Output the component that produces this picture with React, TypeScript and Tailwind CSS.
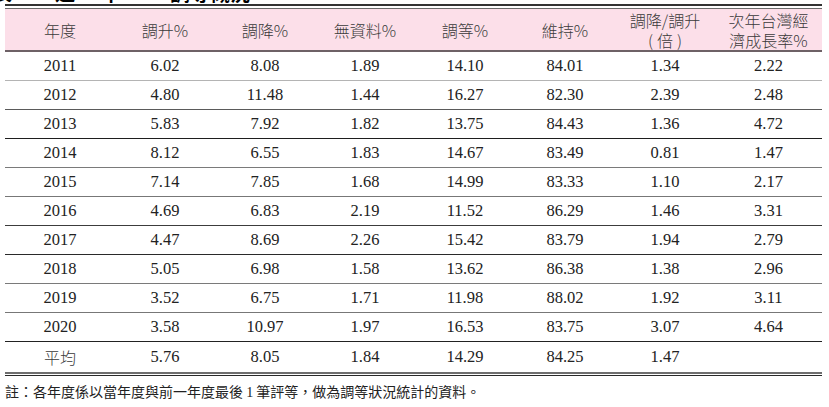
const HEAD_FONT = { fontFamily: '"Noto Sans CJK TC", "Noto Sans", sans-serif' };
const NUM_FONT = { fontFamily: '"Liberation Serif", "Times New Roman", serif' };

const rows = [
  { y: '2011', v: ['6.02', '8.08', '1.89', '14.10', '84.01', '1.34', '2.22'], line: 'border-[#b4b4b4]' },
  { y: '2012', v: ['4.80', '11.48', '1.44', '16.27', '82.30', '2.39', '2.48'], line: 'border-[#5a5a5a]' },
  { y: '2013', v: ['5.83', '7.92', '1.82', '13.75', '84.43', '1.36', '4.72'], line: 'border-[#1e1e1e]' },
  { y: '2014', v: ['8.12', '6.55', '1.83', '14.67', '83.49', '0.81', '1.47'], line: 'border-[#7a7a7a]' },
  { y: '2015', v: ['7.14', '7.85', '1.68', '14.99', '83.33', '1.10', '2.17'], line: 'border-[#777777]' },
  { y: '2016', v: ['4.69', '6.83', '2.19', '11.52', '86.29', '1.46', '3.31'], line: 'border-[#3c3c3c]' },
  { y: '2017', v: ['4.47', '8.69', '2.26', '15.42', '83.79', '1.94', '2.79'], line: 'border-[#2a2a2a]' },
  { y: '2018', v: ['5.05', '6.98', '1.58', '13.62', '86.38', '1.38', '2.96'], line: 'border-[#7a7a7a]' },
  { y: '2019', v: ['3.52', '6.75', '1.71', '11.98', '88.02', '1.92', '3.11'], line: 'border-[#777777]' },
  { y: '2020', v: ['3.58', '10.97', '1.97', '16.53', '83.75', '3.07', '4.64'], line: 'border-[#222222]' },
];

const cols = 'grid grid-cols-[110px_repeat(6,100px)_107px]';

export default function App() {
  return (
    <div className="w-[829px] h-[407px] bg-white overflow-hidden text-[#222]">
      {/* title, cut off at the top edge */}
      <div className="h-[4px] overflow-hidden">
        <div className="-mt-[17px] flex text-[20px] leading-[20px] font-bold text-black" style={HEAD_FONT}>
          <span className="-ml-[8px]">表</span>
          <span className="ml-[43px]">近</span>
          <span className="ml-[25px]">年</span>
          <span className="ml-[50px]">調等概況</span>
        </div>
      </div>

      <div className="ml-[5px] w-[817px]">
        <div className="h-[2px] bg-[#333]" />
        <div className="h-[2px]" />
        <div className="h-[1px] bg-[#6a6a6a]" />

        <div
          className={`${cols} h-[43px] bg-[#fcdfe9] border-b-2 border-[#6e6166] text-[16px] font-light text-[#3a3a3a] items-center text-center`}
          style={HEAD_FONT}
        >
          <div>年度</div>
          <div>調升%</div>
          <div>調降%</div>
          <div>無資料%</div>
          <div>調等%</div>
          <div>維持%</div>
          <div className="leading-[20px] pt-[1px]">
            <div>調降/調升</div>
            <div>
              (<span className="mx-[4px]">倍</span>)
            </div>
          </div>
          <div className="leading-[20px] pt-[1px]">
            <div>次年台灣經</div>
            <div>濟成長率%</div>
          </div>
        </div>

        {rows.map((r) => (
          <div
            key={r.y}
            className={`${cols} h-[29px] border-b ${r.line} items-center text-center text-[16.5px]`}
            style={NUM_FONT}
          >
            <div>{r.y}</div>
            {r.v.map((x, i) => (
              <div key={i}>{x}</div>
            ))}
          </div>
        ))}

        <div className={`${cols} h-[30px] items-center text-center text-[16.5px]`} style={NUM_FONT}>
          <div className="text-[16px] font-light text-[#3a3a3a]" style={HEAD_FONT}>
            平均
          </div>
          <div>5.76</div>
          <div>8.05</div>
          <div>1.84</div>
          <div>14.29</div>
          <div>84.25</div>
          <div>1.47</div>
          <div />
        </div>
        <div className="h-[2px] bg-[#6e6e6e]" />
        <div className="h-[1px]" />
        <div className="h-[1px] bg-[#2a2a2a]" />
      </div>

      <p className="ml-[5px] mt-[6px] text-[14px] leading-[18px] text-[#222]" style={HEAD_FONT}>
        註：各年度係以當年度與前一年度最後{' '}
        <span style={NUM_FONT}>1</span>{' '}
        筆評等，做為調等狀況統計的資料。
      </p>
    </div>
  );
}
